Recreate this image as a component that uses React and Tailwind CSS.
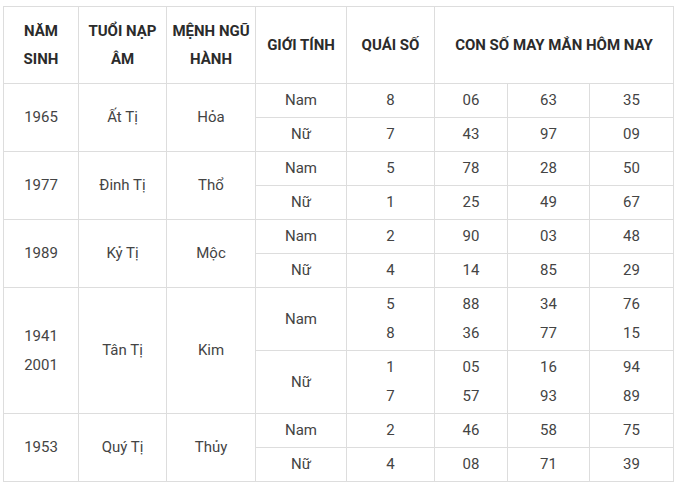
import React from "react";

const groups = [
  { year: ["1965"], tuoi: "Ất Tị", menh: "Hỏa", rows: [
    { g: "Nam", q: ["8"], n: [["06"], ["63"], ["35"]] },
    { g: "Nữ", q: ["7"], n: [["43"], ["97"], ["09"]] },
  ]},
  { year: ["1977"], tuoi: "Đinh Tị", menh: "Thổ", rows: [
    { g: "Nam", q: ["5"], n: [["78"], ["28"], ["50"]] },
    { g: "Nữ", q: ["1"], n: [["25"], ["49"], ["67"]] },
  ]},
  { year: ["1989"], tuoi: "Kỷ Tị", menh: "Mộc", rows: [
    { g: "Nam", q: ["2"], n: [["90"], ["03"], ["48"]] },
    { g: "Nữ", q: ["4"], n: [["14"], ["85"], ["29"]] },
  ]},
  { year: ["1941", "2001"], tuoi: "Tân Tị", menh: "Kim", rows: [
    { g: "Nam", q: ["5", "8"], n: [["88", "36"], ["34", "77"], ["76", "15"]] },
    { g: "Nữ", q: ["1", "7"], n: [["05", "57"], ["16", "93"], ["94", "89"]] },
  ]},
  { year: ["1953"], tuoi: "Quý Tị", menh: "Thủy", rows: [
    { g: "Nam", q: ["2"], n: [["46"], ["58"], ["75"]] },
    { g: "Nữ", q: ["4"], n: [["08"], ["71"], ["39"]] },
  ]},
];

const td = "border border-[#dddddd] text-center align-middle p-0";
const th = td + " font-bold leading-[28px] text-[#2b2b2b]";

function Lines({ items }) {
  return (
    <div className="flex flex-col items-center">
      {items.map((t, i) => (
        <span key={i} className="leading-[29px]">{t}</span>
      ))}
    </div>
  );
}

export default function App() {
  return (
    <div className="bg-white w-[677px] h-[486px] pl-[3px] pt-[6px]" style={{ fontFamily: "Roboto, 'Liberation Sans', sans-serif" }}>
      <table className="border-collapse table-fixed w-[670px] text-[15px] text-[#444444]">
        <colgroup>
          <col className="w-[75px]" />
          <col className="w-[88px]" />
          <col className="w-[89px]" />
          <col className="w-[91px]" />
          <col className="w-[88px]" />
          <col className="w-[73px]" />
          <col className="w-[82px]" />
          <col className="w-[84px]" />
        </colgroup>
        <thead>
          <tr className="h-[77px]">
            <th className={th}>NĂM<br />SINH</th>
            <th className={th}>TUỔI NẠP<br />ÂM</th>
            <th className={th}>MỆNH NGŨ<br />HÀNH</th>
            <th className={th}>GIỚI TÍNH</th>
            <th className={th}>QUÁI SỐ</th>
            <th colSpan={3} className={th}>CON SỐ MAY MẮN HÔM NAY</th>
          </tr>
        </thead>
        <tbody>
          {groups.map((grp, gi) =>
            grp.rows.map((r, ri) => {
              const h = r.q.length > 1 ? "h-[63px]" : "h-[34px]";
              return (
                <tr key={gi + "-" + ri} className={h}>
                  {ri === 0 && (
                    <>
                      <td rowSpan={2} className={td}><Lines items={grp.year} /></td>
                      <td rowSpan={2} className={td}>{grp.tuoi}</td>
                      <td rowSpan={2} className={td}>{grp.menh}</td>
                    </>
                  )}
                  <td className={td}>{r.g}</td>
                  <td className={td}><Lines items={r.q} /></td>
                  {r.n.map((n, ni) => (
                    <td key={ni} className={td}><Lines items={n} /></td>
                  ))}
                </tr>
              );
            })
          )}
        </tbody>
      </table>
    </div>
  );
}
